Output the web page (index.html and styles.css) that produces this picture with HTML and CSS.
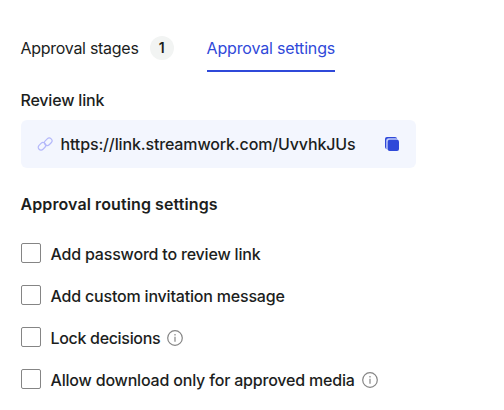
FILE: index.html
```html
<!DOCTYPE html>
<html lang="en">
<head>
  <meta charset="UTF-8">
  <title>Approval settings</title>
  <link rel="stylesheet" href="styles.css">
</head>
<body>

  <nav class="tabs">
    <a class="tab"><span>Approval stages</span> <span class="badge">1</span></a>
    <a class="tab active">Approval settings</a>
  </nav>

  <h2 class="label">Review link</h2>
  <div class="link-box">
    <svg class="link-icon" width="16" height="16" viewBox="0 0 16 16">
      <rect x="7" y="3" width="8.400" height="5.600" rx="2.800" transform="rotate(-45 11.200 5.800)"/>
      <rect x="0.800" y="7.500" width="8.400" height="5.600" rx="2.800" transform="rotate(-45 5 10.300)"/>
    </svg>
    <span class="url">https://link.streamwork.com/UvvhkJUs</span>
    <svg class="copy-icon" width="14" height="14" viewBox="0 0 14 14">
      <rect class="copy-back" width="12" height="12" rx="2"/>
      <rect class="copy-edge" x="1.200" y="1.200" width="12" height="12" rx="2.500"/>
      <rect class="copy-front" x="2.700" y="2.700" width="11.300" height="11.300" rx="2"/>
    </svg>
  </div>

  <h3 class="heading">Approval routing settings</h3>

  <div class="options">
    <label class="option"><input type="checkbox"><span>Add password to review link</span></label>
    <label class="option"><input type="checkbox"><span>Add custom invitation message</span></label>
    <label class="option"><input type="checkbox"><span class="lock">Lock decisions</span>
      <svg class="info" width="16" height="16" viewBox="0 0 16 16"><circle cx="8" cy="8" r="7.300"/><path d="M8 6.800v5M8 4v1.500"/></svg>
    </label>
    <label class="option"><input type="checkbox"><span>Allow download only for approved media</span>
      <svg class="info" width="16" height="16" viewBox="0 0 16 16"><circle cx="8" cy="8" r="7.300"/><path d="M8 6.800v5M8 4v1.500"/></svg>
    </label>
  </div>

</body>
</html>
```
FILE: styles.css
```css
body {
  margin: 0;
  padding: 36px 20.5px 0;
  background: #fff;
  color: #1c1e1d;
  font: 500 16px/24px Inter, sans-serif;
  letter-spacing: -0.19px;
}
.tabs {
  display: flex;
  gap: 33px;
  height: 36px;
}
.tab {
  display: flex;
  gap: 11px;
  height: 34px;
  font-weight: 400;
  letter-spacing: -0.28px;
}
.tab.active {
  color: #2f49d9;
  border-bottom: 2px solid #2f49d9;
  letter-spacing: -0.17px;
}
.badge {
  width: 24px;
  height: 24px;
  border-radius: 50%;
  background: #f2f4f3;
  font-size: 14px;
  font-weight: 600;
  text-align: center;
}
.label {
  margin: 16px 0 8px;
  font-size: 16px;
  font-weight: 500;
}
.link-box {
  box-sizing: border-box;
  display: flex;
  align-items: center;
  width: 395px;
  height: 48px;
  padding: 0 17px 0 16px;
  border-radius: 6px;
  background: #f3f6fe;
}
.link-icon {
  fill: none;
  stroke: #b4b8fa;
  stroke-width: 1.2;
}
.url {
  flex: 1;
  margin-left: 8px;
  letter-spacing: -0.14px;
}
.copy-back,
.copy-front {
  fill: #2f49d9;
}
.copy-edge {
  fill: #c0cbfa;
}
.heading {
  margin: 24px 0 26px;
  font-size: 16px;
  font-weight: 600;
  letter-spacing: 0.1px;
}
.options {
  display: flex;
  flex-direction: column;
  gap: 18px;
}
.option {
  display: flex;
  align-items: center;
  height: 24px;
}
.option input {
  appearance: none;
  box-sizing: border-box;
  width: 20px;
  height: 20px;
  margin: 0 10px 2px 0;
  border: 1px solid #858585;
  border-radius: 2px;
}
.lock {
  letter-spacing: -0.32px;
}
.info {
  margin-left: 7px;
  fill: none;
  stroke: #858585;
  stroke-width: 1.2;
}
```
